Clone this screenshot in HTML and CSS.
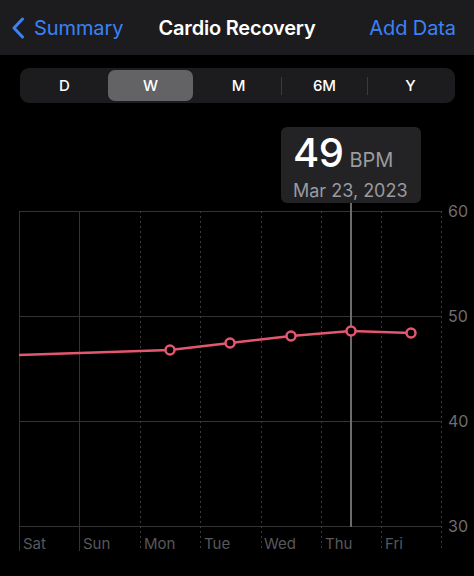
FILE: index.html
```html
<!DOCTYPE html>
<html>
<head>
<meta charset="utf-8">
<link rel="stylesheet" href="styles.css">
</head>
<body>
<header class="nav">
  <div class="back">
    <svg class="chev" width="14" height="22" viewBox="0 0 14 22"><path d="M11.5 2 L3 11 L11.5 20" fill="none" stroke="#3b82f6" stroke-width="3" stroke-linecap="round" stroke-linejoin="round"/></svg>
    <span>Summary</span>
  </div>
  <div class="title">Cardio Recovery</div>
  <div class="add">Add Data</div>
</header>

<div class="seg">
  <div class="opt">D</div>
  <div class="opt sel">W</div>
  <div class="opt">M</div>
  <div class="sep"></div>
  <div class="opt">6M</div>
  <div class="sep"></div>
  <div class="opt">Y</div>
</div>

<section class="chart">
  <svg class="plot" width="474" height="466" viewBox="0 110 474 466">
    <g stroke="#333335" stroke-width="1">
      <line x1="19" y1="211.5" x2="441" y2="211.5"/>
      <line x1="19" y1="316.5" x2="441" y2="316.5"/>
      <line x1="19" y1="421.5" x2="441" y2="421.5"/>
      <line x1="19" y1="526.5" x2="441" y2="526.5"/>
      <line x1="19.5" y1="211" x2="19.5" y2="551"/>
      <line x1="79.5" y1="211" x2="79.5" y2="551"/>
    </g>
    <g stroke="#3c3c3e" stroke-width="1" stroke-dasharray="2 3">
      <line x1="140.5" y1="211" x2="140.5" y2="551"/>
      <line x1="200.5" y1="211" x2="200.5" y2="551"/>
      <line x1="261.5" y1="211" x2="261.5" y2="551"/>
      <line x1="321.5" y1="211" x2="321.5" y2="551"/>
      <line x1="381.5" y1="211" x2="381.5" y2="551"/>
      <line x1="441.5" y1="211" x2="441.5" y2="551"/>
    </g>
    <line x1="351" y1="202" x2="351" y2="527" stroke="#6c6c70" stroke-width="2"/>
    <polyline points="19,355 170,350 230,343 291,336 351,331 411,333" fill="none" stroke="#e5566f" stroke-width="2.5" stroke-linejoin="round"/>
    <g fill="#000" stroke="#e5566f" stroke-width="2.5">
      <circle cx="170" cy="350" r="4.5"/>
      <circle cx="230" cy="343" r="4.5"/>
      <circle cx="291" cy="336" r="4.5"/>
      <circle cx="351" cy="331" r="4.5"/>
      <circle cx="411" cy="333" r="4.5"/>
    </g>
    <g class="ylab">
      <text x="448" y="217">60</text>
      <text x="448" y="322">50</text>
      <text x="448" y="427">40</text>
      <text x="448" y="532">30</text>
    </g>
    <g class="xlab">
      <text x="23" y="549">Sat</text>
      <text x="83" y="549">Sun</text>
      <text x="144" y="549">Mon</text>
      <text x="204" y="549">Tue</text>
      <text x="264" y="549">Wed</text>
      <text x="325" y="549">Thu</text>
      <text x="385" y="549">Fri</text>
    </g>
  </svg>
  <div class="tip">
    <div class="val"><span class="num">49</span><span class="unit">BPM</span></div>
    <div class="date">Mar 23, 2023</div>
  </div>
</section>
</body>
</html>
```

FILE: styles.css
```css
html, body {
  margin: 0;
  padding: 0;
  background: #000;
  width: 474px;
  height: 576px;
  overflow: hidden;
  font-family: Inter, "Liberation Sans", sans-serif;
}

.nav {
  height: 55px;
  background: #1c1c1e;
  display: flex;
  align-items: center;
  position: relative;
  padding: 0 18px 0 11px;
  box-sizing: border-box;
  justify-content: space-between;
}

.back {
  display: flex;
  align-items: center;
  gap: 9px;
  color: #3b82f6;
  font-size: 20px;
  letter-spacing: -0.1px;
}

.chev {
  display: block;
  margin-top: 1px;
}

.title {
  position: absolute;
  left: 0;
  right: 0;
  text-align: center;
  color: #fff;
  font-size: 20px;
  font-weight: 600;
  letter-spacing: -0.2px;
  pointer-events: none;
}

.add {
  color: #3b82f6;
  font-size: 20px;
  letter-spacing: -0.1px;
}

.seg {
  margin: 13px 19px 0 20px;
  height: 35px;
  background: #1c1c1e;
  border-radius: 9px;
  display: flex;
  align-items: center;
  padding: 0 2px;
}

.opt {
  flex: 1;
  height: 31px;
  display: flex;
  align-items: center;
  justify-content: center;
  color: #fff;
  font-size: 15px;
  font-weight: 500;
  border-radius: 7px;
}

.opt.sel {
  background: #636366;
  margin: 0 3px 0 1px;
}

.sep {
  width: 1px;
  height: 18px;
  background: #3a3a3c;
}

.chart {
  position: relative;
  height: 473px;
  margin-top: 7px;
}

.plot {
  display: block;
  position: absolute;
  left: 0;
  top: 0;
}

.ylab text {
  fill: #6e6e72;
  font-size: 16px;
  font-family: Inter, "Liberation Sans", sans-serif;
}

.xlab text {
  fill: #58585c;
  font-size: 15px;
  font-family: Inter, "Liberation Sans", sans-serif;
}

.tip {
  position: absolute;
  left: 281px;
  top: 17px;
  width: 140px;
  height: 76px;
  box-sizing: border-box;
  background: #232325;
  border-radius: 6px;
  padding: 6px 0 0 12px;
}

.val {
  display: flex;
  align-items: baseline;
  gap: 6px;
  line-height: 40px;
}

.num {
  color: #fff;
  font-size: 40px;
  font-weight: 500;
  letter-spacing: -0.5px;
}

.unit {
  color: #9a9a9f;
  font-size: 20px;
}

.date {
  color: #9a9a9f;
  font-size: 18px;
  line-height: 22px;
  margin-top: 0;
}
```
